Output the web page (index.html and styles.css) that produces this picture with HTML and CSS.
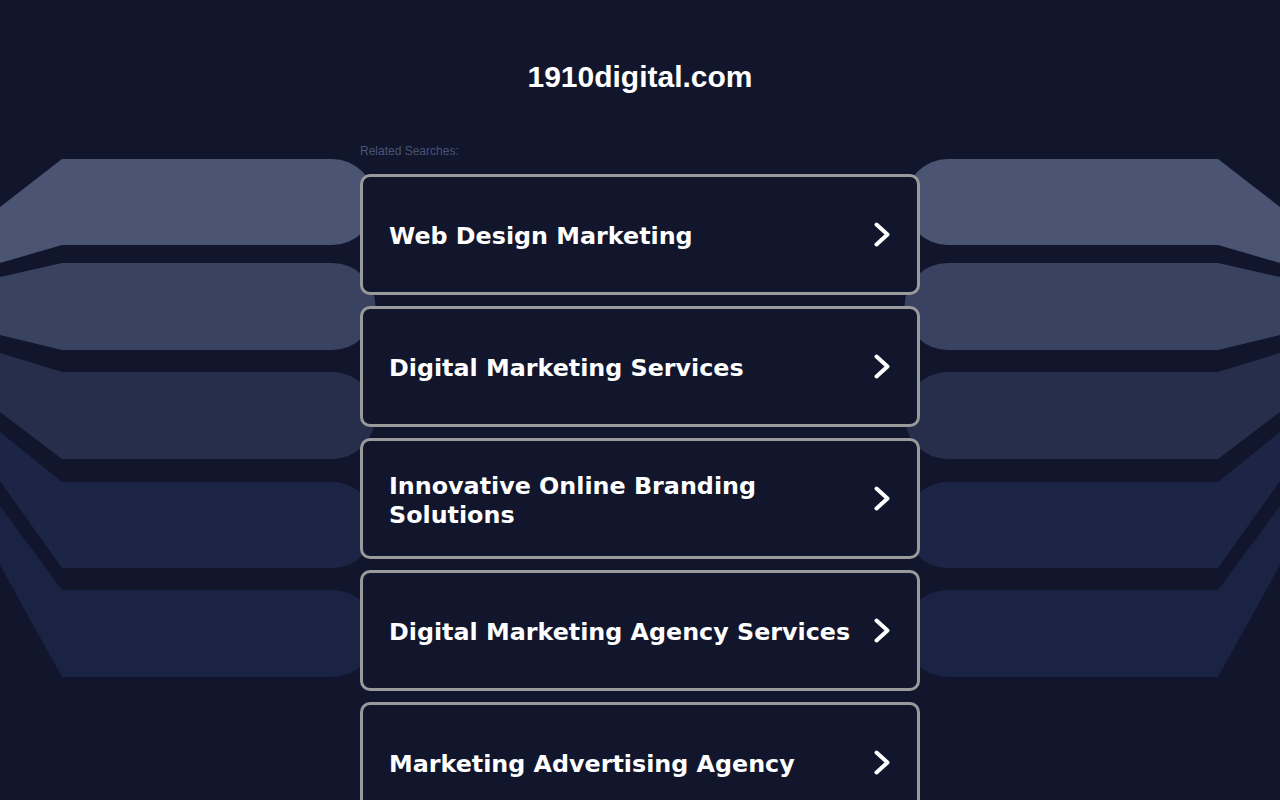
FILE: index.html
```html
<!DOCTYPE html>
<html lang="en">
<head>
<meta charset="utf-8">
<title>1910digital.com</title>
<link rel="stylesheet" href="styles.css">
</head>
<body>
<svg class="backdrop" width="1280" height="800" viewBox="0 0 1280 800" aria-hidden="true">
  <defs>
    <pattern id="dots" width="4" height="4" patternUnits="userSpaceOnUse">
      <rect x="1" y="1" width="1" height="1" fill="#141a36" opacity="0.35"/>
    </pattern>
    <g id="bands">
      <path fill="#4b5472" d="M0,207 L62,159 H332 A43,43 0 0 1 332,245 H62 L0,263 Z"/>
      <path fill="#394260" d="M0,277 L62,263 H332 A43.5,43.5 0 0 1 332,350 H62 L0,335 Z"/>
      <path fill="#262e4c" d="M0,353 L62,372 H332 A43.5,43.5 0 0 1 332,459 H62 L0,412 Z"/>
      <path fill="#1d2546" d="M0,432 L62,482 H332 A43,43 0 0 1 332,568 H62 L0,481 Z"/>
      <path fill="#1b2345" d="M0,506 L62,590 H332 A43.5,43.5 0 0 1 332,677 H62 L0,565 Z"/>
      <path fill="url(#dots)" d="M0,432 L62,482 H332 A43,43 0 0 1 332,568 H62 L0,481 Z M0,506 L62,590 H332 A43.5,43.5 0 0 1 332,677 H62 L0,565 Z"/>
    </g>
  </defs>
  <use href="#bands"/>
  <use href="#bands" transform="translate(1280 0) scale(-1 1)"/>
</svg>

<main class="page">
  <h1 class="domain">1910digital.com</h1>
  <p class="related">Related Searches:</p>
  <ul class="links">
    <li><a class="link-card" href="#"><span class="link-text">Web Design Marketing</span><svg class="chev" width="16" height="25" viewBox="0 0 16 25"><path d="M2.5 2.5 L13.5 12.5 L2.5 22.5"/></svg></a></li>
    <li><a class="link-card" href="#"><span class="link-text">Digital Marketing Services</span><svg class="chev" width="16" height="25" viewBox="0 0 16 25"><path d="M2.5 2.5 L13.5 12.5 L2.5 22.5"/></svg></a></li>
    <li><a class="link-card" href="#"><span class="link-text">Innovative Online Branding Solutions</span><svg class="chev" width="16" height="25" viewBox="0 0 16 25"><path d="M2.5 2.5 L13.5 12.5 L2.5 22.5"/></svg></a></li>
    <li><a class="link-card" href="#"><span class="link-text">Digital Marketing Agency Services</span><svg class="chev" width="16" height="25" viewBox="0 0 16 25"><path d="M2.5 2.5 L13.5 12.5 L2.5 22.5"/></svg></a></li>
    <li><a class="link-card" href="#"><span class="link-text">Marketing Advertising Agency</span><svg class="chev" width="16" height="25" viewBox="0 0 16 25"><path d="M2.5 2.5 L13.5 12.5 L2.5 22.5"/></svg></a></li>
  </ul>
</main>
</body>
</html>
```

FILE: styles.css
```css
html, body {
  margin: 0;
  padding: 0;
  background: #11162d;
}

body {
  position: relative;
  min-height: 800px;
  font-family: "Liberation Sans", Arial, sans-serif;
  overflow-x: hidden;
}

.backdrop {
  position: absolute;
  top: 0;
  left: 0;
  z-index: 0;
  display: block;
}

.page {
  position: relative;
  z-index: 1;
  width: 560px;
  margin: 0 auto;
  padding-top: 60px;
}

.domain {
  margin: 0;
  font-family: "Liberation Sans", Arial, sans-serif;
  font-weight: 700;
  font-size: 30px;
  line-height: 34px;
  color: #ffffff;
  text-align: center;
}

.related {
  margin: 50px 0 0;
  font-size: 12px;
  line-height: 14px;
  color: #4a5373;
}

.links {
  list-style: none;
  margin: 16px 0 0;
  padding: 0;
  display: flex;
  flex-direction: column;
  gap: 11px;
}

.link-card {
  box-sizing: border-box;
  height: 121px;
  display: flex;
  align-items: center;
  justify-content: space-between;
  gap: 16px;
  padding: 0 27px 0 26px;
  border: 3px solid #9a9a9a;
  border-radius: 10px;
  background: #11162d;
  text-decoration: none;
}

.link-text {
  margin-top: 4px;
  font-family: "DejaVu Sans", Verdana, sans-serif;
  font-weight: 700;
  font-size: 23.8px;
  line-height: 29px;
  color: #ffffff;
}

.chev {
  flex: none;
  display: block;
}

.chev path {
  fill: none;
  stroke: #ffffff;
  stroke-width: 4;
  stroke-linecap: round;
  stroke-linejoin: round;
}
```
